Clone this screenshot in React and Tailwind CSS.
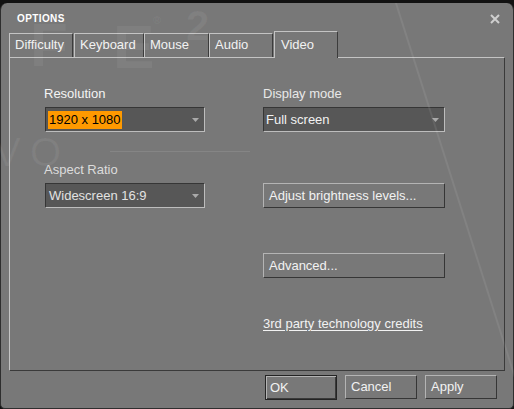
import React from "react";

function Arrow() {
  return (
    <svg width="7" height="4" viewBox="0 0 7 4" className="block">
      <polygon points="0,0 7,0 3.5,4" fill="#a9a9a9" />
    </svg>
  );
}

function Select({ w, children }) {
  return (
    <div
      className={`${w} h-[25px] flex items-center justify-between border border-t-[#363636] border-l-[#363636] border-r-[#bdbdbd] border-b-[#bdbdbd] bg-[#575757] pl-[2px] pr-[5px]`}
    >
      {children}
      <Arrow />
    </div>
  );
}

function Btn({ children, className = "" }) {
  return (
    <div
      className={`flex items-center pl-[5px] border border-t-[#b4b4b4] border-l-[#b4b4b4] border-r-[#363636] border-b-[#363636] text-[#f2f2f2] ${className}`}
    >
      {children}
    </div>
  );
}

function Tab({ w, children, className = "" }) {
  return (
    <div
      className={`${w} h-[24px] border-t border-l border-r border-t-[#c4c4c4] border-l-[#c4c4c4] border-r-[#3c3c3c] pl-[5px] pt-[3px] leading-[16px] text-[#f2f2f2] ${className}`}
    >
      {children}
    </div>
  );
}

export default function App() {
  return (
    <div className="w-[514px] h-[409px] bg-[#121212] pt-[3px] overflow-hidden font-['Liberation_Sans',Arial,sans-serif] text-[13px]">
      <div className="relative h-[406px] w-[514px] rounded-t-[7px] rounded-b-[5px] bg-[#787878] border-l border-r border-b border-[#2e2e2e]">
        <div className="relative z-[1]">
          {/* title bar */}
          <div className="h-[28px] flex items-start justify-between pl-[16px] pr-[13px]">
            <div className="pt-[10px] text-[10px] leading-[12px] font-bold tracking-[0.4px] text-white">
              OPTIONS
            </div>
            <svg width="10" height="10" viewBox="0 0 10 10" className="mt-[11px]">
              <path d="M1 1 L9 9 M9 1 L1 9" stroke="#cfcfcf" strokeWidth="2" />
            </svg>
          </div>

          {/* tabs */}
          <div className="h-[26px] flex items-end pl-[8px]">
            <Tab w="w-[64px]">Difficulty</Tab>
            <Tab w="w-[70px]" className="ml-[1px]">Keyboard</Tab>
            <Tab w="w-[65px]">Mouse</Tab>
            <Tab w="w-[64px]">Audio</Tab>
            <div className="relative z-10 ml-[1px] w-[64px] h-[27px] -mb-[1px] bg-[#787878] border-t border-l border-r border-t-[#c4c4c4] border-l-[#c4c4c4] border-r-[#3c3c3c] pl-[6px] pt-[5px] leading-[16px] text-[#f2f2f2]">
              Video
            </div>
          </div>

          {/* panel */}
          <div className="ml-[8px] w-[496px] h-[314px] border border-t-[#c4c4c4] border-l-[#c4c4c4] border-r-[#3a3a3a] border-b-[#3a3a3a] flex pl-[34px] pt-[28px] leading-[16px]">
            <div className="w-[219px] flex flex-col items-start">
              <div className="text-[#f4f4f4]">Resolution</div>
              <div className="mt-[5px] ml-[1px]">
                <Select w="w-[160px]">
                  <span className="bg-[#ff9900] text-black px-[1px] leading-[18px]">1920 x 1080</span>
                </Select>
              </div>
              <div className="mt-[30px] text-[#dcdcdc]">Aspect Ratio</div>
              <div className="mt-[5px] ml-[1px]">
                <Select w="w-[160px]">
                  <span className="text-[#e2e2e2] pl-[1px]">Widescreen 16:9</span>
                </Select>
              </div>
            </div>
            <div className="w-[182px] flex flex-col items-start">
              <div className="text-[#e8e8e8]">Display mode</div>
              <div className="mt-[5px]">
                <Select w="w-[182px]">
                  <span className="text-[#f2f2f2]">Full screen</span>
                </Select>
              </div>
              <Btn className="mt-[51px] w-[182px] h-[25px]">Adjust brightness levels...</Btn>
              <Btn className="mt-[45px] w-[182px] h-[25px]">Advanced...</Btn>
              <div className="mt-[38px] text-[#f2f2f2] underline underline-offset-[2px]">
                3rd party technology credits
              </div>
            </div>
          </div>

          {/* bottom buttons */}
          <div className="mt-[4px] flex justify-end gap-[8px] pr-[16px]">
            <div className="w-[72px] h-[25px] flex items-center pl-[4px] border border-[#242424] shadow-[inset_1px_1px_0_#b4b4b4,inset_-1px_-1px_0_#3a3a3a] text-[#f2f2f2]">
              OK
            </div>
            <Btn className="w-[72px] h-[24px]">Cancel</Btn>
            <Btn className="w-[72px] h-[24px]">Apply</Btn>
          </div>
        </div>

        {/* faint background artwork overlay */}
        <svg
          className="absolute left-[-1px] top-0 z-[2] pointer-events-none"
          width="514"
          height="406"
          viewBox="0 3 514 406"
        >
          <g fill="#ffffff" fillOpacity="0.06" fontFamily="Liberation Sans, Arial, sans-serif" fontWeight="bold">
            <text x="30" y="66" fontSize="62">F</text>
            <text x="113" y="68" fontSize="62">E</text>
            <text x="153" y="24" fontSize="11">®</text>
            <text x="186" y="40" fontSize="42">2</text>
            <text x="-6" y="166" fontSize="40" fontWeight="normal">V</text>
            <text x="30" y="166" fontSize="40" fontWeight="normal">O</text>
          </g>
          <line x1="110" y1="151.5" x2="250" y2="151.5" stroke="#ffffff" strokeOpacity="0.1" strokeWidth="1" />
          <line x1="395" y1="0" x2="525" y2="409" stroke="#ffffff" strokeOpacity="0.08" strokeWidth="2" />
        </svg>
      </div>
    </div>
  );
}
